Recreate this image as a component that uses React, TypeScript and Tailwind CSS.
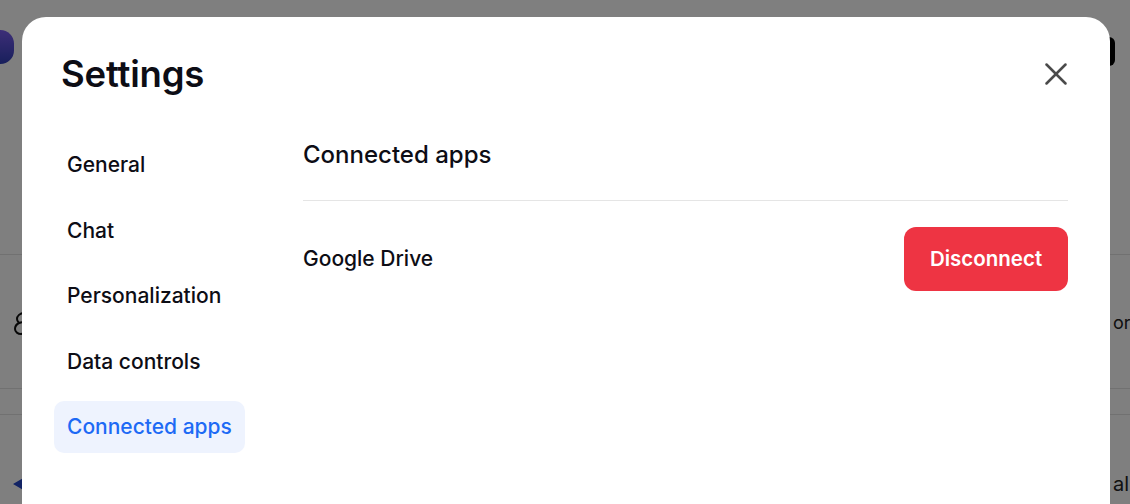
import { X } from "lucide-react";

const navItems = ["General", "Chat", "Personalization", "Data controls", "Connected apps"];

export default function App() {
  const active = "Connected apps";

  return (
    <div className="relative h-[504px] w-[1130px] overflow-hidden bg-white font-['Inter','Noto_Sans',sans-serif] text-[#0d0d15]">
      {/* page behind the dialog */}
      <div className="flex h-full flex-col">
        <header className="flex h-[255px] items-start justify-between border-b border-[#e2e2e2]">
          <div className="-ml-[20px] mt-[30px] h-[34px] w-[34px] rounded-[40%] bg-gradient-to-b from-[#7a5cf0] to-[#2f3fb8]" />
          <div className="mr-[15px] mt-[37px] h-[29px] w-[90px] rounded-[6px] bg-black" />
        </header>
        <div className="flex h-[134px] items-center justify-between border-b border-[#e2e2e2] pl-[13px]">
          <svg width="22" height="26" viewBox="0 0 22 26" fill="none" stroke="#111" strokeWidth="2" className="mt-[4px]">
            <path d="M11 2c-4 0-7 3-7 6 0 2 1 3 2 4-2 1-4 3-4 6 0 3 3 5 6 5 2 0 4-1 5-3" />
            <path d="M6 12c2-1 5-1 7 1" />
          </svg>
          <div className="w-[17px] overflow-hidden whitespace-nowrap pt-[2px] text-[18px] text-[#222]">or chat</div>
        </div>
        <div className="h-[26px] border-b border-[#e2e2e2]" />
        <div className="flex flex-1 items-center justify-between pl-[13px] pt-[48px]">
          <svg width="12" height="14" viewBox="0 0 12 14">
            <path d="M0 7 L12 0 L9 7 L12 14 Z" fill="#2447c9" />
          </svg>
          <div className="w-[17px] overflow-hidden whitespace-nowrap text-[20px] text-[#222]">al</div>
        </div>
      </div>

      {/* overlay */}
      <div className="absolute inset-0 bg-black/50" />

      {/* dialog */}
      <div className="absolute left-[22px] top-[17px] h-[520px] w-[1088px] rounded-[24px] bg-white">
        <div className="flex items-center justify-between pl-[39px] pr-[35px] pt-[35px]">
          <h1 className="text-[36.5px] font-semibold leading-[44px] tracking-[-0.2px]">Settings</h1>
          <button className="flex h-[38px] w-[38px] items-center justify-center text-[#4a4a4a]">
            <X size={38} strokeWidth={1.6} />
          </button>
        </div>

        <div className="mt-[43px] flex pl-[32px] pr-[42px]">
          <nav className="flex w-[249px] shrink-0 flex-col items-start gap-[13.5px]">
            {navItems.map((item) => (
              <div
                key={item}
                className={
                  item === active
                    ? "flex h-[52px] items-center rounded-[10px] bg-[#eef3fe] px-[13px] text-[21px] font-medium text-[#1d6af5]"
                    : "flex h-[52px] items-center px-[13px] text-[21px] font-medium"
                }
              >
                {item}
              </div>
            ))}
          </nav>

          <section className="flex-1">
            <h2 className="border-b border-[#e5e5e5] pb-[29px] text-[24px] font-medium leading-[32px]">
              Connected apps
            </h2>
            <div className="flex items-center justify-between pt-[26px]">
              <span className="text-[21px] font-medium">Google Drive</span>
              <button className="h-[64px] w-[164px] rounded-[12px] bg-[#ee3443] text-[20.5px] font-semibold text-white">
                Disconnect
              </button>
            </div>
          </section>
        </div>
      </div>
    </div>
  );
}
